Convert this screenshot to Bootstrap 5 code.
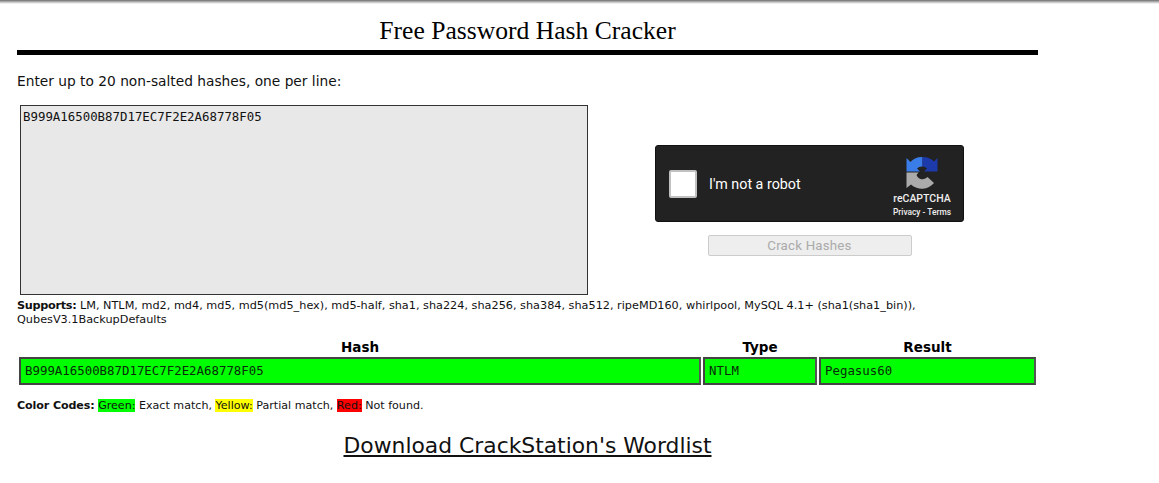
<!DOCTYPE html>
<html lang="en">
<head>
    <meta charset="UTF-8">
    <meta name="viewport" content="width=device-width, initial-scale=1.0">
    <title>Free Password Hash Cracker</title>
    <link href="https://cdn.jsdelivr.net/npm/bootstrap@5.3.3/dist/css/bootstrap.min.css" rel="stylesheet">
    <style>
        body { background: #fff; color: #111; font-family: "DejaVu Sans", Verdana, sans-serif; font-size: 13.75px; }
        .top-shadow { height: 4px; background: linear-gradient(#6e6e6e, #d8d8d8 70%, #fff); }
        .page-wrap { width: 1021px; margin-left: 17px; }
        .page-title { font-family: "Liberation Serif", serif; font-size: 25.6px; line-height: 30px; font-weight: 400; text-align: center; color: #000; margin: 0; padding-top: 12px; height: 46px; }
        .thick-rule { height: 5px; background: #000; }
        .intro-line { margin: 0; padding-top: 18px; height: 50px; line-height: 16px; }
        .hash-input { width: 568px; height: 190px; margin-left: 3px; padding: 3px 2px; border: 1px solid #333; border-radius: 0; background: #e8e8e8; color: #111; font-family: "DejaVu Sans Mono", monospace; font-size: 12.4px; line-height: 15px; resize: none; }
        .hash-input:focus { background: #e8e8e8; border-color: #333; box-shadow: none; }
        .captcha-col { margin-left: 67px; padding-top: 40px; width: 309px; }
        .captcha-box { height: 77px; background: #222; border: 1px solid #111; border-radius: 3px; font-family: Roboto, sans-serif; color: #fff; padding-left: 13px; padding-right: 9px; }
        .captcha-check { width: 28px; height: 28px; background: #fff; border: 2px solid #c1c1c1; border-radius: 2px; }
        .captcha-label { font-size: 14.3px; margin-left: 12px; padding-top: 3px; }
        .captcha-brand { width: 64px; color: #eee; line-height: 1; padding-top: 6px; }
        .captcha-name { font-size: 10.5px; font-weight: 500; margin-top: 5px; }
        .captcha-links { font-size: 8.4px; font-weight: 500; margin-top: 4px; white-space: nowrap; }
        .crack-btn { display: block; width: 204px; height: 21px; margin: 13px auto 0; padding: 0; border: 1px solid #ccc; border-radius: 2px; background: #eee; color: #aaa; font-family: Roboto, sans-serif; font-size: 13.3px; line-height: 19px; letter-spacing: .2px; }
        .supports-line { margin: 0; padding-top: 4px; height: 43px; font-size: 11.25px; line-height: 14px; }
        .supports-line strong { letter-spacing: -.3px; }
        .result-table { width: 1021px; border-collapse: separate; border-spacing: 2px; table-layout: fixed; color: #000; }
        .result-table th { font-size: 13.5px; line-height: 15px; font-weight: 700; text-align: center; padding: 0; }
        .result-table td { height: 28px; background: #0f0; border: 2px solid #444; border-right-color: #555; padding: 0 4px; font-family: "DejaVu Sans Mono", monospace; font-size: 12.4px; color: #0a2a0a; }
        .type-col { width: 114px; }
        .result-col { width: 217px; }
        .color-codes { margin: 0; padding-top: 11px; font-size: 11.1px; line-height: 16px; }
        .color-codes strong { letter-spacing: -.1px; }
        .mark-green { background: #0f0; }
        .mark-yellow { background: #ff0; }
        .mark-red { background: #f00; }
        .wordlist-wrap { padding-top: 17px; text-align: center; font-size: 21.85px; line-height: 30px; }
        .wordlist-wrap a { color: #111; }
    </style>
</head>
<body>
    <div class="top-shadow"></div>
    <div class="page-wrap">
        <h1 class="page-title">Free Password Hash Cracker</h1>
        <div class="thick-rule"></div>
        <p class="intro-line">Enter up to 20 non-salted hashes, one per line:</p>

        <div class="d-flex">
            <textarea class="form-control hash-input" spellcheck="false">B999A16500B87D17EC7F2E2A68778F05</textarea>
            <div class="captcha-col">
                <div class="captcha-box d-flex align-items-center">
                    <div class="captcha-check"></div>
                    <div class="captcha-label flex-grow-1">I'm not a robot</div>
                    <div class="captcha-brand text-center">
                        <svg class="d-block mx-auto" width="32" height="32" viewBox="0 0 64 64" aria-hidden="true">
                            <path fill="#3b7de8" d="M33 0A32 32 0 0 0 9 10L1 2V29H28L22 23A13 13 0 0 1 33 19Z"/>
                            <path fill="#1c3aa9" d="M33 0V19A13 13 0 0 1 42 23L36 29H63V2L56 9A32 32 0 0 0 33 0Z"/>
                            <path fill="#ababab" d="M1 31H25L21 36A13 13 0 0 0 43 40L56 52A32 32 0 0 1 10 55L1 62Z"/>
                        </svg>
                        <div class="captcha-name">reCAPTCHA</div>
                        <div class="captcha-links">Privacy - Terms</div>
                    </div>
                </div>
                <button class="crack-btn" disabled>Crack Hashes</button>
            </div>
        </div>

        <p class="supports-line"><strong>Supports:</strong> LM, NTLM, md2, md4, md5, md5(md5_hex), md5-half, sha1, sha224, sha256, sha384, sha512, ripeMD160, whirlpool, MySQL 4.1+ (sha1(sha1_bin)), QubesV3.1BackupDefaults</p>

        <table class="result-table">
            <colgroup>
                <col>
                <col class="type-col">
                <col class="result-col">
            </colgroup>
            <thead>
                <tr><th>Hash</th><th>Type</th><th>Result</th></tr>
            </thead>
            <tbody>
                <tr><td>B999A16500B87D17EC7F2E2A68778F05</td><td>NTLM</td><td>Pegasus60</td></tr>
            </tbody>
        </table>

        <p class="color-codes"><strong>Color Codes:</strong> <span class="mark-green">Green:</span> Exact match, <span class="mark-yellow">Yellow:</span> Partial match, <span class="mark-red">Red:</span> Not found.</p>

        <div class="wordlist-wrap"><a href="#">Download CrackStation's Wordlist</a></div>
    </div>
    <script src="https://cdn.jsdelivr.net/npm/bootstrap@5.3.3/dist/js/bootstrap.bundle.min.js"></script>
</body>
</html>
